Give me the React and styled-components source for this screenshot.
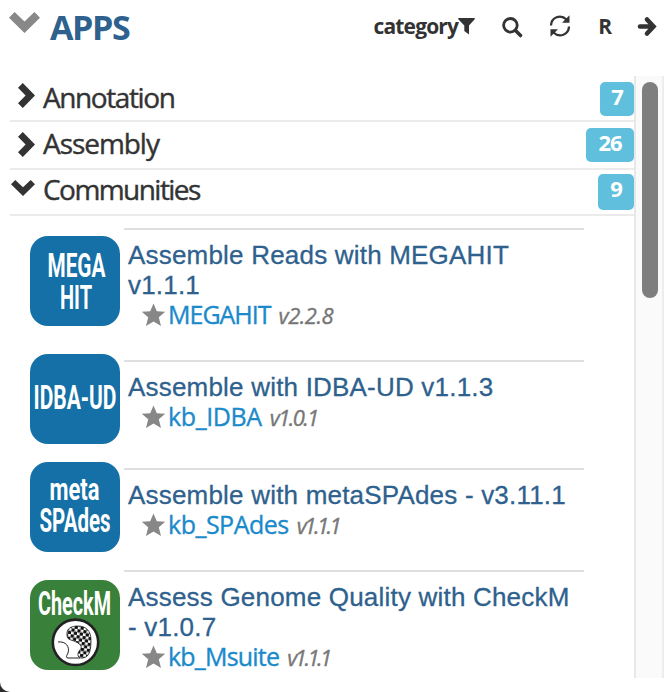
import React from "react";
import styled, { createGlobalStyle } from "styled-components";

const GlobalStyle = createGlobalStyle`
  * { box-sizing: border-box; }
  body { margin: 0; background: #2c2c2e; overflow: hidden; }
`;

const Panel = styled.div`
  width: 672px;
  height: 692px;
  background: #fff;
  border-bottom-left-radius: 10px;
  font-family: "Open Sans", "Noto Sans", sans-serif;
  color: #333;
  overflow: hidden;
`;

const Header = styled.header`
  height: 76px;
  padding: 12px 16px 0 9px;
  display: flex;
  align-items: flex-start;
  justify-content: space-between;
`;

const Heading = styled.div`
  display: flex;
  gap: 10px;
`;

const Title = styled.h1`
  margin: 0;
  font-size: 34px;
  line-height: 31px;
  font-weight: 700;
  letter-spacing: -1.4px;
  color: #2e618d;
`;

const Toolbar = styled.div`
  height: 29px;
  display: flex;
  align-items: center;
`;

const Tool = styled.button`
  border: 0;
  padding: 0;
  margin-left: ${(p) => p.$gap || 0}px;
  background: none;
  color: #333;
  font: 700 21px/30px "Open Sans", sans-serif;
  letter-spacing: ${(p) => p.$spacing || 0}px;
  display: flex;
  align-items: center;
`;

const ToolLabel = styled.span`
  margin: -2px 0 0;
`;

const Glyph = styled.svg`
  display: block;
  flex: none;
  overflow: visible;
`;

const Body = styled.div`
  display: flex;
  height: 602px;
`;

const List = styled.main`
  width: 624px;
  margin-left: 10px;
`;

const Category = styled.div`
  height: ${(p) => p.$height}px;
  padding-top: ${(p) => p.$top}px;
  border-bottom: 2px solid #ebebeb;
  display: flex;
  align-items: flex-start;
`;

const Marker = styled.div`
  width: 33px;
  height: ${(p) => p.$height}px;
  padding-left: ${(p) => (p.$open ? 1 : 8)}px;
  display: flex;
  align-items: center;
`;

const CategoryName = styled.div`
  flex: 1;
  font-size: 28px;
  line-height: 30px;
  letter-spacing: ${(p) => p.$spacing}px;
  -webkit-text-stroke: 0.4px currentColor;
`;

const Badge = styled.span`
  width: ${(p) => p.$width}px;
  height: ${(p) => p.$height}px;
  border-radius: 5px;
  background: #5fbfdd;
  color: #fff;
  font-size: 22px;
  line-height: 28px;
  font-weight: 700;
  letter-spacing: -1px;
  text-align: center;
`;

const Apps = styled.div`
  padding: 12px 0 0 20px;
`;

const AppRow = styled.article`
  height: ${(p) => p.$height}px;
  display: flex;
  align-items: flex-start;
  gap: 4px;
`;

const Tile = styled.div`
  width: 90px;
  height: 90px;
  margin-top: ${(p) => p.$offset}px;
  border-radius: 18px;
  background: ${(p) => p.$color};
`;

const AppText = styled.div`
  width: 460px;
  padding: 10px 0 0 4px;
  border-top: 2px solid #dfdfdf;
`;

const AppName = styled.div`
  font: 26px/30px "Liberation Sans", Arial, sans-serif;
  letter-spacing: 0.2px;
  color: #2e618d;
  white-space: pre-line;
  -webkit-text-stroke: 0.3px currentColor;
`;

const Meta = styled.div`
  height: 30px;
  padding-left: 14px;
  display: flex;
  align-items: center;
`;

const Module = styled.a`
  margin: -2px 0 0 3px;
  font-size: 25px;
  line-height: 30px;
  letter-spacing: ${(p) => p.$spacing}px;
  color: #1a8acb;
  -webkit-text-stroke: 0.35px currentColor;
`;

const Version = styled.em`
  margin: -1px 0 0 8px;
  font-size: 22px;
  line-height: 30px;
  letter-spacing: ${(p) => p.$spacing}px;
  color: #777;
  -webkit-text-stroke: 0.35px currentColor;
`;

const Track = styled.div`
  width: 30px;
  padding: 6px 0 0 6px;
  background: #fafafa;
  border-left: 2px solid #e8e8e8;
  border-right: 2px solid #ededed;
`;

const Thumb = styled.div`
  width: 16px;
  height: 216px;
  border-radius: 8px;
  background: #7e7e7e;
`;

const ChevronDown = ({ width, height, color }) => (
  <Glyph width={width} height={height} viewBox="0 0 30 20" preserveAspectRatio="none">
    <path d="M0 5.4 5.4 0 15 9 24.6 0 30 5.4 15 20Z" fill={color} />
  </Glyph>
);

const ChevronRight = () => (
  <Glyph width="17" height="25" viewBox="0 0 17 25">
    <path d="M0 4.8 4.8 0 17 12.5 4.8 25 0 20.2 7.6 12.5Z" fill="#333" />
  </Glyph>
);

const Funnel = () => (
  <Glyph width="17" height="17" viewBox="0 0 17 17">
    <path d="M.7 0H16.4Q17.3.5 16.7 1.2L11 7.4V16.6L6.3 13V7.4L.3 1.2Q-.2.4.7 0Z" fill="#333" />
  </Glyph>
);

const Search = () => (
  <Glyph width="20" height="20" viewBox="0 0 20 20" fill="none" stroke="#333">
    <circle cx="8.4" cy="8.3" r="6.8" strokeWidth="2.8" />
    <path d="m13.5 13.5 5 5" strokeWidth="3.6" strokeLinecap="round" />
  </Glyph>
);

const Refresh = () => (
  <Glyph width="20" height="22" viewBox="0 1 20 22">
    <g fill="none" stroke="#333" strokeWidth="2.3">
      <path d="M1 10.5C1.3 2.2 10.5-1.2 16.5 4.5" />
      <path d="M19 11.5C18.7 19.8 9.5 23.2 3.5 17.5" />
    </g>
    <path d="M19.5.2V7.8H12ZM.5 21.8V14.2H8Z" fill="#333" />
  </Glyph>
);

const Arrow = () => (
  <Glyph width="18" height="19" viewBox="0 0 18 19">
    <path d="M2 9.5H15M9 2.5 15.5 9.5 9 16.5" fill="none" stroke="#333" strokeWidth="4.6" strokeLinecap="round" />
  </Glyph>
);

const Star = () => (
  <Glyph width="23" height="22" viewBox="0 0 23 22">
    <path d="m11.5-.5 3.3 7.8 8.4.5-6.4 5.5 2.2 8.7-7.5-4.6L4 22l2.2-8.7L-.2 7.8l8.4-.5Z" fill="#878787" />
  </Glyph>
);

const TileText = ({ x, y, width, size, children }) => (
  <text
    x={x}
    y={y}
    fontFamily="Roboto, sans-serif"
    fontWeight="700"
    fontSize={size}
    textLength={width}
    lengthAdjust="spacingAndGlyphs"
    fill="#fff"
  >
    {children}
  </text>
);

const GenomeMark = () => (
  <g>
    <defs>
      <pattern id="checks" width="6" height="6" patternUnits="userSpaceOnUse" patternTransform="rotate(8)">
        <rect width="6" height="6" fill="#fff" />
        <circle cx="1.5" cy="1.5" r="1.9" fill="#111" />
        <circle cx="4.5" cy="4.5" r="1.9" fill="#111" />
      </pattern>
    </defs>
    <circle cx="45.5" cy="62.3" r="22.7" fill="#fff" stroke="#222" strokeWidth="2.6" />
    <path
      d="M37 55C36 48 42 46 48 46C56 46 61 51 61 60C61 69 60 77 53 78C48 79 46 74 50 70C54 65 47 62 41 60C38 59 37 58 37 55Z"
      fill="url(#checks)" stroke="#222" strokeWidth=".8"
    />
    <path d="M28 62C36 61 40 67 38 73Q35 78 38 78H50" fill="none" stroke="#222" strokeWidth="1" />
  </g>
);

const categories = [
  { name: "Annotation", count: 7, width: 34, badge: 34, height: 46, top: 6, marker: 27, spacing: -1.4 },
  { name: "Assembly", count: 26, width: 48, badge: 34, height: 48, top: 6, marker: 32, spacing: -1.05 },
  { name: "Communities", count: 9, width: 36, badge: 36, height: 46, top: 4, marker: 28, spacing: -1.55, open: true },
];

const apps = [
  {
    name: "Assemble Reads with MEGAHIT\nv1.1.1", module: "MEGAHIT", version: "v2.2.8",
    height: 132, offset: 8, color: "#1470a6", moduleSpacing: -1, versionSpacing: -0.5,
    art: [["MEGA", 17.5, 41, 58, 34], ["HIT", 30, 73, 32, 34]],
  },
  {
    name: "Assemble with IDBA-UD v1.1.3", module: "kb_IDBA", version: "v1.0.1",
    height: 108, offset: -6, color: "#1470a6", moduleSpacing: -0.4, versionSpacing: -1.6,
    art: [["IDBA-UD", 3.5, 55, 83, 34]],
  },
  {
    name: "Assemble with metaSPAdes - v3.11.1", module: "kb_SPAdes", version: "v1.1.1",
    height: 102, offset: -6, color: "#1470a6", moduleSpacing: -0.5, versionSpacing: -2.5,
    art: [["meta", 19.5, 38, 50, 31], ["SPAdes", 9.5, 70, 71, 34]],
  },
  {
    name: "Assess Genome Quality with CheckM\n- v1.0.7", module: "kb_Msuite", version: "v1.1.1",
    height: 106, offset: 10, color: "#39803a", moduleSpacing: -0.8, versionSpacing: -2.5, genome: true,
    art: [["CheckM", 8, 34.5, 73, 33]],
  },
];

export default function App() {
  return (
    <>
      <GlobalStyle />
      <Panel>
        <Header>
          <Heading>
            <ChevronDown width={31} height={21} color="#888" />
            <Title>APPS</Title>
          </Heading>
          <Toolbar>
            <Tool $spacing={-0.85}><ToolLabel>category</ToolLabel><Funnel /></Tool>
            <Tool $gap={27} aria-label="Search"><Search /></Tool>
            <Tool $gap={28} aria-label="Refresh"><Refresh /></Tool>
            <Tool $gap={28}><ToolLabel>R</ToolLabel></Tool>
            <Tool $gap={26} aria-label="Close catalog"><Arrow /></Tool>
          </Toolbar>
        </Header>
        <Body>
          <List>
            {categories.map((c) => (
              <Category key={c.name} $height={c.height} $top={c.top}>
                <Marker $open={c.open} $height={c.marker}>
                  {c.open ? <ChevronDown width={24} height={16} color="#333" /> : <ChevronRight />}
                </Marker>
                <CategoryName $spacing={c.spacing}>{c.name}</CategoryName>
                <Badge $width={c.width} $height={c.badge}>{c.count}</Badge>
              </Category>
            ))}
            <Apps>
              {apps.map((a) => (
                <AppRow key={a.name} $height={a.height}>
                  <Tile $offset={a.offset} $color={a.color}>
                    <Glyph width="90" height="90" viewBox="0 0 90 90">
                      {a.art.map(([label, x, y, width, size]) => (
                        <TileText key={label} x={x} y={y} width={width} size={size}>{label}</TileText>
                      ))}
                      {a.genome && <GenomeMark />}
                    </Glyph>
                  </Tile>
                  <AppText>
                    <AppName>{a.name}</AppName>
                    <Meta>
                      <Star />
                      <Module $spacing={a.moduleSpacing}>{a.module}</Module>
                      <Version $spacing={a.versionSpacing}>{a.version}</Version>
                    </Meta>
                  </AppText>
                </AppRow>
              ))}
            </Apps>
          </List>
          <Track><Thumb /></Track>
        </Body>
      </Panel>
    </>
  );
}
